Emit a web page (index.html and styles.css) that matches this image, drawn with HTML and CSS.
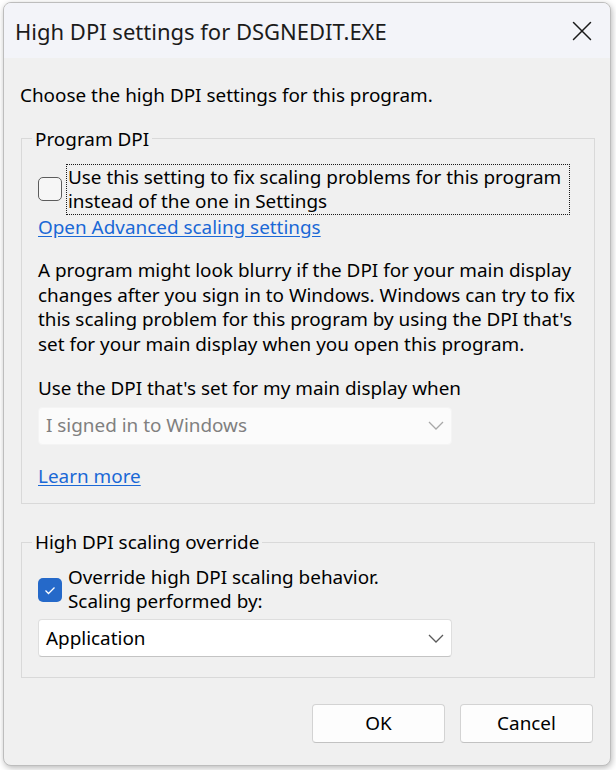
FILE: index.html
```html
<!DOCTYPE html>
<html lang="en">
<head>
<meta charset="utf-8">
<title>High DPI settings for DSGNEDIT.EXE</title>
<link rel="stylesheet" href="styles.css">
</head>
<body>
<div class="window">
  <div class="titlebar">
    <span class="title">High DPI settings for DSGNEDIT.EXE</span>
    <span class="close" aria-label="Close">
      <svg width="20" height="20" viewBox="0 0 20 20"><path d="M1.5 1.5 L18.5 18.5 M18.5 1.5 L1.5 18.5" stroke="#1a1a1a" stroke-width="1.5" fill="none" stroke-linecap="round"/></svg>
    </span>
  </div>
  <div class="content">
    <p class="intro">Choose the high DPI settings for this program.</p>

    <fieldset class="group group-dpi">
      <legend>Program DPI</legend>
      <div class="check-row">
        <span class="box"></span>
        <span class="check-label focus">Use this setting to fix scaling problems for this program<br>instead of the one in Settings</span>
      </div>
      <a class="link link-adv" href="#">Open Advanced scaling settings</a>
      <p class="para">A program might look blurry if the DPI for your main display<br>changes after you sign in to Windows. Windows can try to fix<br>this scaling problem for this program by using the DPI that's<br>set for your main display when you open this program.</p>
      <p class="para-when">Use the DPI that's set for my main display when</p>
      <div class="select disabled">
        <span>I signed in to Windows</span>
        <svg class="chev" width="16" height="9" viewBox="0 0 16 9"><path d="M1 1 L8 8 L15 1" stroke="#a8a8a8" stroke-width="1.3" fill="none"/></svg>
      </div>
      <a class="link link-learn" href="#">Learn more</a>
    </fieldset>

    <fieldset class="group group-override">
      <legend>High DPI scaling override</legend>
      <div class="check-row">
        <span class="box checked">
          <svg width="24" height="24" viewBox="0 0 24 24"><path d="M7.5 12.5 L10.5 15.5 L16.5 9.5" stroke="#fff" stroke-width="1.3" fill="none"/></svg>
        </span>
        <span class="check-label tight">Override high DPI scaling behavior.<br>Scaling performed by:</span>
      </div>
      <div class="select">
        <span>Application</span>
        <svg class="chev" width="16" height="9" viewBox="0 0 16 9"><path d="M1 1 L8 8 L15 1" stroke="#5a5a5a" stroke-width="1.3" fill="none"/></svg>
      </div>
    </fieldset>

    <div class="buttons">
      <button class="btn">OK</button>
      <button class="btn">Cancel</button>
    </div>
  </div>
</div>
</body>
</html>
```
FILE: styles.css
```css
html, body {
  margin: 0;
  padding: 0;
  background: #ffffff;
}

body {
  width: 616px;
  height: 770px;
  overflow: hidden;
}

.window {
  box-sizing: border-box;
  margin: 2px 0 0 3px;
  width: 608px;
  height: 764px;
  border: 1px solid #bdbdbd;
  border-radius: 8px;
  background: #f0f0f0;
  overflow: hidden;
  box-shadow: 1px 2px 6px rgba(0, 0, 0, 0.28);
  font-family: "Noto Sans", "Open Sans", sans-serif;
  font-size: 18.9px;
  line-height: 24.5px;
  color: #000;
  white-space: nowrap;
}

.titlebar {
  height: 55px;
  background: #f3f4f9;
  display: flex;
  align-items: center;
  justify-content: space-between;
  padding: 0 18px 0 11px;
}

.title {
  font-family: "Noto Sans", "Open Sans", sans-serif;
  font-size: 22px;
  color: #1b1b1b;
  line-height: 26px;
}

.close {
  display: flex;
  width: 20px;
  height: 20px;
}

.content {
  padding: 25px 15px 0 17px;
}

.intro {
  margin: 0 0 19px -1px;
}

.group {
  margin: 0;
  border: 1px solid #d9d9d9;
  padding: 0 16px;
  min-width: 0;
}

.group legend {
  padding: 0 3px;
  margin-left: -6px;
  line-height: 24px;
}

.group-dpi {
  padding-top: 13px;
  padding-bottom: 15px;
}

.group-override {
  margin-top: 26px;
  padding-top: 11px;
  padding-bottom: 20px;
}

.check-row {
  display: flex;
  align-items: center;
  gap: 4px;
}

.box {
  box-sizing: border-box;
  flex: none;
  width: 24px;
  height: 24px;
  border: 1.5px solid #5c5c5c;
  border-radius: 5px;
  background: #f6f6f6;
  display: flex;
}

.box.checked {
  border: none;
  background: #2569c9;
}

.check-label {
  box-sizing: border-box;
  padding: 0 1px;
  border: 1px solid transparent;
}

.check-label.tight {
  line-height: 23.5px;
}

.check-label.focus {
  width: 504px;
  border: 1px dotted #1a1a1a;
}

.link {
  display: block;
  width: max-content;
  color: #1a68d6;
  text-decoration: underline;
  text-underline-offset: 2px;
}

.link-adv {
  margin-top: 0;
}

.para {
  margin: 19px 0 0 0;
}

.para-when {
  margin: 20px 0 0 0;
}

.select {
  box-sizing: border-box;
  width: 414px;
  height: 38px;
  margin-top: 6px;
  display: flex;
  align-items: center;
  justify-content: space-between;
  padding: 0 7px 0 7px;
  background: #ffffff;
  border: 1px solid #dedede;
  border-bottom-color: #c4c4c4;
  border-radius: 4px;
}

.select.disabled {
  background: #fbfbfb;
  border-color: #f4f4f4;
  color: #808080;
}

.group-override .select {
  margin-top: 5px;
}

.link-learn {
  margin-top: 19px;
}

.buttons {
  display: flex;
  justify-content: flex-end;
  gap: 15px;
  margin-top: 26px;
  padding-right: 2px;
}

.btn {
  box-sizing: border-box;
  width: 133px;
  height: 39px;
  background: #fdfdfd;
  border: 1px solid #d3d3d3;
  border-bottom-color: #c2c2c2;
  border-radius: 4px;
  font: inherit;
  color: #000;
  padding: 0;
}
```
